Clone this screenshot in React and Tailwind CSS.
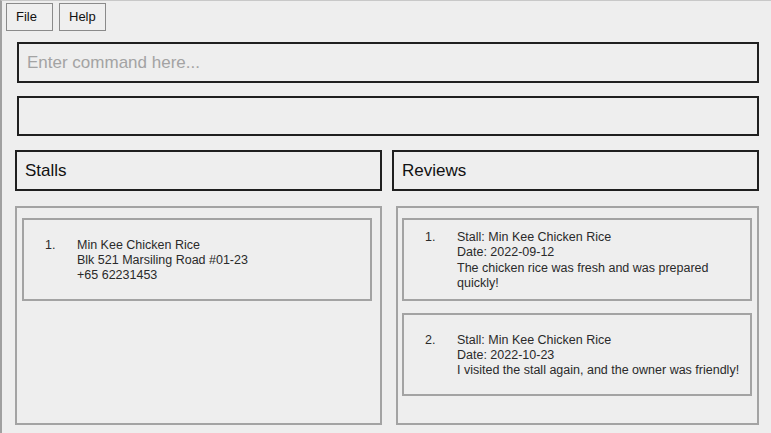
const stalls = [
  {
    lines: ["Min Kee Chicken Rice", "Blk 521 Marsiling Road #01-23", "+65 62231453"],
  },
];

const reviews = [
  {
    lines: [
      "Stall: Min Kee Chicken Rice",
      "Date: 2022-09-12",
      "The chicken rice was fresh and was prepared quickly!",
    ],
  },
  {
    lines: [
      "Stall: Min Kee Chicken Rice",
      "Date: 2022-10-23",
      "I visited the stall again, and the owner was friendly!",
    ],
  },
];

const font = { fontFamily: '"Liberation Sans", Arial, sans-serif' };

const Card = ({ index, lines }) => {
  return (
    <div className="h-[83px] border-2 border-[#a3a3a3] flex items-center pt-[2px]">
      <div className="flex text-[12.5px] leading-[15.3px] text-[#2a2a2a]">
        <span className="w-[53px] pl-[21px] shrink-0">{index}.</span>
        <div className="w-[290px]">
          {lines.map((l, i) => (
            <div key={i}>{l}</div>
          ))}
        </div>
      </div>
    </div>
  );
};

const MenuButton = ({ label }) => (
  <button
    type="button"
    className="w-[47px] h-[28px] border border-[#8a8a8a] text-[13px] text-[#111] text-left pl-[9px] bg-[#efefef]"
  >
    {label}
  </button>
);

export default function App() {
  return (
    <div
      className="w-[771px] h-[433px] bg-[#eeeeee] border-t border-t-[#c8c8c8] border-l-2 border-l-[#a0a0a0] overflow-hidden"
      style={font}
    >
      {/* menu bar */}
      <div className="flex gap-[6px] pl-[4px] pt-[2px]">
        <MenuButton label="File" />
        <MenuButton label="Help" />
      </div>

      <div className="pl-[13px] pt-[11px] flex flex-col">
        {/* command box */}
        <div className="ml-[2px] w-[742px] h-[41px] border-2 border-[#1f1f1f] flex items-center pl-[8px] text-[17px] text-[#a3a3a3]">
          Enter command here...
        </div>
        {/* result box */}
        <div className="ml-[2px] mt-[13px] w-[742px] h-[40px] border-2 border-[#1f1f1f]" />

        {/* panels */}
        <div className="flex gap-[10px] mt-[14px]">
          <div className="w-[367px] h-[41px] border-2 border-[#1f1f1f] flex items-center pl-[8px] text-[17px] text-[#111]">
            Stalls
          </div>
          <div className="w-[367px] h-[41px] border-2 border-[#1f1f1f] flex items-center pl-[8px] text-[17px] text-[#111]">
            Reviews
          </div>
        </div>

        <div className="flex mt-[15px]">
          <div className="w-[367px] h-[219px] border-2 border-[#a3a3a3] pt-[10px] pl-[5px] pr-[8px]">
            {stalls.map((s, i) => (
              <Card key={i} index={i + 1} lines={s.lines} />
            ))}
          </div>
          <div className="ml-[14px] w-[363px] h-[219px] border-2 border-[#a3a3a3] pt-[10px] pl-[4px] pr-[5px] flex flex-col gap-[12px]">
            {reviews.map((r, i) => (
              <Card key={i} index={i + 1} lines={r.lines} />
            ))}
          </div>
        </div>
      </div>
    </div>
  );
}
